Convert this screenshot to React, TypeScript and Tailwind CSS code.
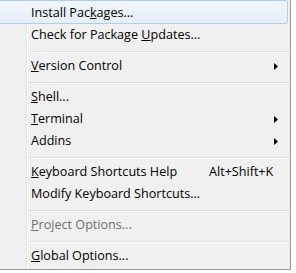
import React from "react";

type Item = {
  kind: "item";
  label: React.ReactNode;
  shortcut?: string;
  sub?: boolean;
  disabled?: boolean;
  active?: boolean;
};
type Sep = { kind: "sep" };

const U = ({ c }: { c: string }) => <span className="underline underline-offset-[1px] decoration-[1px]">{c}</span>;

const items: (Item | Sep)[] = [
  { kind: "item", label: <>Install Pac<U c="k" />ages...</>, active: true },
  { kind: "item", label: <>Check for Package <U c="U" />pdates...</> },
  { kind: "sep" },
  { kind: "item", label: <><U c="V" />ersion Control</>, sub: true },
  { kind: "sep" },
  { kind: "item", label: <><U c="S" />hell...</> },
  { kind: "item", label: <><U c="T" />erminal</>, sub: true },
  { kind: "item", label: <>Addins</>, sub: true },
  { kind: "sep" },
  { kind: "item", label: <><U c="K" />eyboard Shortcuts Help</>, shortcut: "Alt+Shift+K" },
  { kind: "item", label: <>Modify Keyboard Shortcuts...</> },
  { kind: "sep" },
  { kind: "item", label: <><U c="P" />roject Options...</>, disabled: true },
  { kind: "sep" },
  { kind: "item", label: <><U c="G" />lobal Options...</> },
];

function Arrow() {
  return (
    <svg width="4" height="7" viewBox="0 0 4 7" className="block">
      <polygon points="0,0 4,3.5 0,7" fill="#000" />
    </svg>
  );
}

export default function App() {
  return (
    <div className="w-[296px] h-[273px] bg-white overflow-hidden" style={{ fontFamily: '"Open Sans", "Noto Sans", sans-serif' }}>
      <div className="w-[291px] h-[270px] border-r border-b border-[#979797] bg-[#f0f0f0] bg-[linear-gradient(to_right,transparent_26px,#e2e3e3_26px,#e2e3e3_27px,#ffffff_27px,#ffffff_28px,transparent_28px)] flex flex-col">
        {items.map((it, i) => {
          if (it.kind === "sep") {
            return (
              <div key={i} className="h-[9px] pl-[28px] pr-[1px] pt-[5px]">
                <div className="h-[1px] bg-[#e0e0e0]" />
                <div className="h-[1px] bg-white" />
              </div>
            );
          }
          if (it.active) {
            return (
              <div key={i} className="h-[24px] pr-[2px]">
                <div className="h-[24px] border border-l-0 border-[#aecdf3] rounded-r-[3px] bg-[linear-gradient(to_bottom,#f2f6fc,#e6eef9)] flex items-center pl-[31px] text-[12.6px] text-black leading-none pt-[3px]">
                  {it.label}
                </div>
              </div>
            );
          }
          return (
            <div
              key={i}
              className={`h-[22px] flex items-center pl-[31px] pr-[12px] text-[12.6px] leading-none pt-[1px] ${it.disabled ? "text-[#6d6d6d]" : "text-black"}`}
            >
              <span className="flex-1">{it.label}</span>
              {it.shortcut && <span className="w-[66px] mr-[3px] whitespace-nowrap">{it.shortcut}</span>}
              {it.sub && <Arrow />}
            </div>
          );
        })}
      </div>
    </div>
  );
}
